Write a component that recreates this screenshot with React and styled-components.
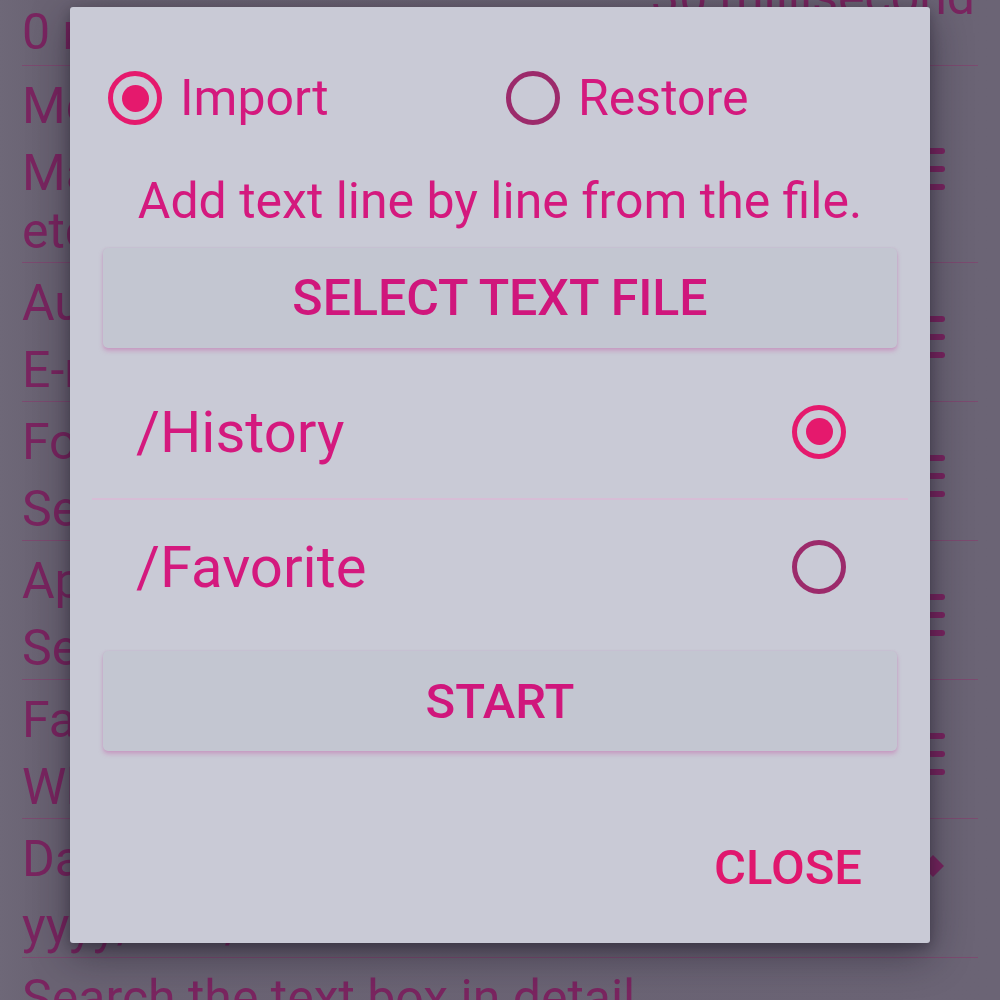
import React, { useState } from 'react'
import styled, { createGlobalStyle } from 'styled-components'

const GlobalStyle = createGlobalStyle`
  html, body {
    margin: 0;
    padding: 0;
    background: #6b6475;
  }
  body {
    font-family: Roboto, "Noto Sans", "Liberation Sans", sans-serif;
    overflow: hidden;
  }
`

const settings = [
  { title: 'Menu', lines: ['Manage the menu items, order,', 'etc.'], icon: 'handle' },
  { title: 'Auto backup', lines: ['E-mail the backup file'], icon: 'handle' },
  { title: 'Font', lines: ['Set the font size'], icon: 'handle' },
  { title: 'App theme', lines: ['Select the color theme'], icon: 'handle' },
  { title: 'Favorite', lines: ['When the item is tapped'], icon: 'handle' },
  { title: 'Date format', lines: ['yyyy/MM/dd HH:mm'], icon: 'arrow' },
  { title: 'Search the text box in detail', lines: [], icon: null },
]

const HandleIcon = () => (
  <svg width="40" height="42" viewBox="0 0 40 42">
    <rect x="0" y="0" width="40" height="6" rx="3" fill="#7a2560" />
    <rect x="0" y="18" width="40" height="6" rx="3" fill="#7a2560" />
    <rect x="0" y="36" width="40" height="6" rx="3" fill="#7a2560" />
  </svg>
)

const ArrowIcon = () => (
  <svg width="24" height="24" viewBox="0 0 24 24">
    <path d="M12 1 L23 12 L12 23 L1 12 Z" fill="#7a2560" />
  </svg>
)

const App = () => {
  const [mode, setMode] = useState('import')
  const [folder, setFolder] = useState('history')

  return (
    <Screen>
      <GlobalStyle />
      <SettingsList>
        <TopRow>
          <CutLine $right>30 millisecond</CutLine>
          <CutLine>0 ms means no vibration</CutLine>
        </TopRow>
        {settings.map((s, i) => (
          <SettingRow key={i}>
            <SettingText>
              <SettingTitle>{s.title}</SettingTitle>
              {s.lines.map((l, j) => (
                <SettingSummary key={j}>{l}</SettingSummary>
              ))}
            </SettingText>
            {s.icon === 'handle' && (
              <IconSlot>
                <HandleIcon />
              </IconSlot>
            )}
            {s.icon === 'arrow' && (
              <IconSlot $top>
                <ArrowIcon />
              </IconSlot>
            )}
          </SettingRow>
        ))}
      </SettingsList>

      <Dialog>
        <ModeGroup>
          <ModeOption onClick={() => setMode('import')}>
            <Radio $checked={mode === 'import'} />
            <OptionLabel>Import</OptionLabel>
          </ModeOption>
          <ModeOption onClick={() => setMode('restore')}>
            <Radio $checked={mode === 'restore'} />
            <OptionLabel>Restore</OptionLabel>
          </ModeOption>
        </ModeGroup>

        <Hint>Add text line by line from the file.</Hint>

        <RaisedButton $size={50}>SELECT TEXT FILE</RaisedButton>

        <FolderList>
          <FolderItem onClick={() => setFolder('history')}>
            <FolderName>/History</FolderName>
            <Radio $checked={folder === 'history'} />
          </FolderItem>
          <FolderItem $last onClick={() => setFolder('favorite')}>
            <FolderName>/Favorite</FolderName>
            <Radio $checked={folder === 'favorite'} />
          </FolderItem>
        </FolderList>

        <RaisedButton $top={18}>START</RaisedButton>

        <ButtonBar>
          <TextButton>CLOSE</TextButton>
        </ButtonBar>
      </Dialog>
    </Screen>
  )
}

export default App

const Screen = styled.div`
  position: relative;
  width: 1000px;
  height: 1000px;
  overflow: hidden;
  background: linear-gradient(90deg, #6e6878 0%, #6a6373 4%, #6b6475 100%);
`

const SettingsList = styled.div`
  display: flex;
  flex-direction: column;
  padding: 0 22px;
  color: #7a2560;
`

const TopRow = styled.div`
  box-sizing: border-box;
  border-bottom: 1px solid #7c4b70;
  display: flex;
  flex-direction: column;
  margin-top: -20px;
  height: 86px;
`

const CutLine = styled.div`
  font-size: 50px;
  line-height: 35px;
  white-space: nowrap;
  text-align: ${p => (p.$right ? 'right' : 'left')};
  padding-right: ${p => (p.$right ? '3px' : '0')};
`

const SettingRow = styled.div`
  display: flex;
  align-items: center;
  padding: 11px 0 2px;
  border-bottom: 1px solid #7c4b70;
`

const SettingText = styled.div`
  flex: 1;
  display: flex;
  flex-direction: column;
`

const SettingTitle = styled.div`
  font-size: 50px;
  line-height: 58px;
  white-space: nowrap;
  margin-bottom: 9px;
`

const SettingSummary = styled.div`
  font-size: 50px;
  line-height: 58px;
  white-space: nowrap;
`

const IconSlot = styled.div`
  display: flex;
  align-self: ${p => (p.$top ? 'flex-start' : 'center')};
  margin-top: ${p => (p.$top ? '24px' : '0')};
  margin-right: 33px;
`

const Dialog = styled.div`
  position: absolute;
  left: 70px;
  top: 7px;
  width: 860px;
  height: 936px;
  box-sizing: border-box;
  background: #c9cad6;
  border-radius: 3px;
  box-shadow: 0 12px 40px rgba(20, 16, 30, 0.45), 0 4px 12px rgba(20, 16, 30, 0.3);
  padding: 64px 22px 0;
  display: flex;
  flex-direction: column;
`

const ModeGroup = styled.div`
  display: flex;
  padding: 0 4px 0 16px;
`

const ModeOption = styled.div`
  flex: 1;
  display: flex;
  align-items: center;
  gap: 18px;
  height: 54px;
  cursor: pointer;
`

const Radio = styled.span`
  flex: none;
  width: 54px;
  height: 54px;
  box-sizing: border-box;
  border-radius: 50%;
  border: 5px solid ${p => (p.$checked ? '#e5196d' : '#9c2a6b')};
  display: flex;
  align-items: center;
  justify-content: center;

  &::after {
    content: '';
    width: 27px;
    height: 27px;
    border-radius: 50%;
    background: #e5196d;
    display: ${p => (p.$checked ? 'block' : 'none')};
  }
`

const OptionLabel = styled.span`
  font-size: 50px;
  line-height: 54px;
  color: #d4197e;
`

const Hint = styled.div`
  margin-top: 49px;
  font-size: 50px;
  line-height: 54px;
  color: #d4197e;
  text-align: center;
`

const RaisedButton = styled.div`
  margin: ${p => p.$top || 20}px 11px 0;
  height: 100px;
  display: flex;
  align-items: center;
  justify-content: center;
  background: #c3c6d1;
  border-radius: 5px;
  box-shadow: 0 3px 4px rgba(196, 120, 178, 0.55), 0 0 2px rgba(196, 150, 190, 0.4);
  font-size: ${p => p.$size || 49}px;
  font-weight: 500;
  color: #d0167c;
  cursor: pointer;
`

const FolderList = styled.div`
  margin-top: 17px;
  display: flex;
  flex-direction: column;
`

const FolderItem = styled.div`
  height: 133px;
  display: flex;
  align-items: center;
  justify-content: space-between;
  padding: 0 62px 0 44px;
  border-bottom: ${p => (p.$last ? 'none' : '2px solid #d7bdd6')};
  cursor: pointer;
`

const FolderName = styled.span`
  font-size: 58px;
  color: #d4197e;
`

const ButtonBar = styled.div`
  flex: 1;
  display: flex;
  align-items: flex-end;
  justify-content: flex-end;
  padding: 0 46px 46px 0;
`

const TextButton = styled.span`
  font-size: 49px;
  line-height: 58px;
  font-weight: 500;
  color: #e0176e;
  cursor: pointer;
`
